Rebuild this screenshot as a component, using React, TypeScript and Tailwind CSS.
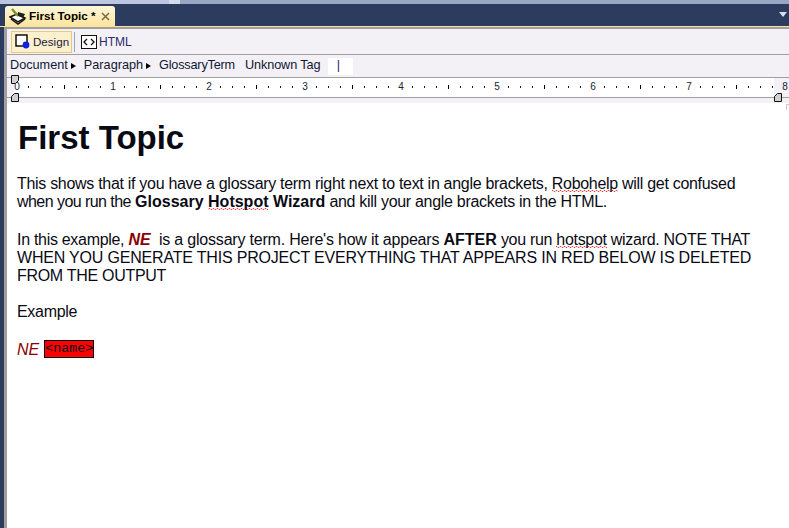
const ticks = Array.from({ length: 65 }, (_, i) => i);

const Squiggle: React.FC<{ children: React.ReactNode }> = ({ children }) => (
  <span className="bg-[url('data:image/svg+xml,%3Csvg%20xmlns=%22http://www.w3.org/2000/svg%22%20width=%224%22%20height=%222%22%3E%3Cpath%20d=%22M0%201.5L1%20.5L2%20.5L3%201.5L4%201.5%22%20fill=%22none%22%20stroke=%22%23e03030%22%20stroke-width=%22.9%22/%3E%3C/svg%3E')] bg-[length:4px_2px] bg-bottom bg-repeat-x">
    {children}
  </span>
);

const Handle: React.FC<{ className: string; flip?: boolean }> = ({ className, flip }) => (
  <svg width="8" height="9" viewBox="0 0 8 9" className={className}>
    <path
      d={flip ? "M.5 3.5 L3.5 .5 H7.5 V8.5 H.5 Z" : "M.5 .5 H7.5 V5.5 L4.5 8.5 H.5 Z"}
      fill="#d0d0d0"
      stroke="#111"
    />
  </svg>
);

function Ruler() {
  return (
    <div className="relative h-[21px] shrink-0 border-y border-[#a0a0a0] bg-[#f3f1f6]">
      <div className="relative ml-[7px] mr-[15px] h-full bg-white">
        {ticks.map((i) => {
          if (i % 8 === 0) {
            return (
              <span
                key={i}
                className="absolute top-[2px] w-[8px] -translate-x-1/2 text-center text-[10px] leading-[14px] text-[#223]"
                style={{ left: i * 12 + 3 }}
              >
                {i / 8}
              </span>
            );
          }
          return (
            <span
              key={i}
              className={
                i % 4 === 0
                  ? "absolute top-[7px] h-[4px] w-px bg-black"
                  : "absolute top-[8px] h-[2px] w-px bg-[#222]"
              }
              style={{ left: i * 12 + 2 }}
            />
          );
        })}
      </div>
      <Handle className="absolute left-[4px] top-[-3px]" />
      <Handle className="absolute left-[4px] top-[15px]" flip />
      <Handle className="absolute left-[767px] top-[15px]" flip />
    </div>
  );
}

function App() {
  return (
    <div className="flex h-[528px] w-[789px] flex-col overflow-hidden bg-[#2b3c5e] font-['Liberation_Sans',sans-serif] text-black">
      <div className="flex h-[4px] shrink-0 bg-[#98a8c4]">
        <div className="w-[169px] bg-[#bcc6e0]" />
        <div className="w-[11px] bg-[#d4dcec]" />
      </div>
      <div className="flex h-[22px] shrink-0 items-end justify-between pl-[5px] pr-px">
        <div className="flex h-[20px] w-[110px] items-center rounded-t-[3px] bg-gradient-to-b from-[#fff7dc] to-[#fde49c] pl-[4px]">
          <svg width="18" height="17" viewBox="0 0 18 17" className="shrink-0">
            <path d="M1 9 L8 6 L16 10 L9 14 Z" fill="#fff" stroke="#111" strokeWidth="1.5" />
            <path d="M2 11 L9 16 L16 11" fill="none" stroke="#111" strokeWidth="1.5" />
            <path d="M3 1 L9 8" stroke="#7f8f2a" strokeWidth="2.4" />
            <path d="M9 4 L16 6 L14 10 L9 8 Z" fill="#222" />
          </svg>
          <span className="ml-[2px] whitespace-nowrap text-[11.7px] font-bold leading-none">First Topic *</span>
          <svg width="9" height="9" viewBox="0 0 9 9" className="ml-[5px] shrink-0">
            <path d="M1 1 L8 8 M8 1 L1 8" stroke="#7a6a4a" strokeWidth="1.5" />
          </svg>
        </div>
        <svg width="10" height="6" viewBox="0 0 10 6" className="mb-[8px]">
          <path d="M1 0 H9 L5 5 Z" fill="#d8dfee" />
        </svg>
      </div>
      <div className="h-px shrink-0 bg-[#fde49c]" />
      <div className="flex min-h-0 flex-1 flex-col pl-[4px]">
        <div className="flex min-h-0 flex-1 flex-col border-l-[3px] border-t-2 border-[#a0a0a0] bg-[#f3f1f6]">
          <div className="flex h-[26px] shrink-0 items-center border-b border-[#a0a0a0] pl-[4px]">
            <div className="flex h-[22px] w-[61px] items-center border border-[#e9c77c] bg-[#fdf0cf] pl-[3px] text-[11.6px] text-[#1a1a3a]">
              <svg width="15" height="15" viewBox="0 0 15 15" className="shrink-0">
                <rect x="1" y="1" width="11" height="11" fill="#fff" stroke="#000" strokeWidth="1.4" />
                <circle cx="11" cy="11" r="3.4" fill="#1020e0" />
              </svg>
              <span className="ml-[3px]">Design</span>
            </div>
            <div className="ml-[2px] h-[20px] w-px bg-[#9aa8c0]" />
            <div className="ml-[6px] flex items-center text-[12px] text-[#2a2a6a]">
              <svg width="16" height="14" viewBox="0 0 16 14" className="shrink-0">
                <rect x="0.5" y="0.5" width="15" height="13" fill="#fff" stroke="#111" />
                <path d="M6 4 L3 7 L6 10 M10 4 L13 7 L10 10" fill="none" stroke="#111" strokeWidth="1.3" />
              </svg>
              <span className="ml-[2px]">HTML</span>
            </div>
          </div>
          <div className="flex h-[22px] shrink-0 items-center pl-[3px] text-[12.7px] text-[#111833]">
            <span>Document</span>
            <span className="ml-[3px] mr-[8px] h-0 w-0 border-y-[3px] border-l-[5px] border-y-transparent border-l-black" />
            <span>Paragraph</span>
            <span className="ml-[3px] mr-[8px] h-0 w-0 border-y-[3px] border-l-[5px] border-y-transparent border-l-black" />
            <span className="tracking-[-0.2px]">GlossaryTerm</span>
            <span className="ml-[10px] tracking-[-0.1px]">Unknown Tag</span>
            <span className="ml-[8px] flex h-[17px] w-[25px] items-center justify-center bg-white pr-[5px] text-[#2a2a6a]">|</span>
          </div>
          <Ruler />
          <div className="min-h-0 flex-1 pt-[5px]">
            <div className="relative h-full bg-white pl-[10px] pr-[19px] text-[16px] leading-[18px] tracking-[-0.3px] text-[#0a0a14]">
              <div className="absolute right-0 top-px h-[6px] w-[3px] border-l border-t border-[#c8c8c8]" />
              <h1 className="pl-px pt-[16px] text-[33px] font-bold leading-[37px] tracking-normal">First Topic</h1>
              <p className="mt-[19px]">
                This shows that if you have a glossary term right next to text in angle brackets, <Squiggle>Robohelp</Squiggle> will get confused <span className="tracking-[-0.55px]">when you run the</span> <b className="tracking-normal">Glossary <Squiggle>Hotspot</Squiggle> Wizard</b> and kill your angle brackets in the HTML.
              </p>
              <p className="mt-[20px]">
                In this example, <b className="italic tracking-normal text-[#8b0000]">NE</b>&nbsp; <span className="tracking-[-0.2px]">is a glossary term. Here's how it appears</span> <b className="tracking-normal">AFTER</b> you run <Squiggle>hotspot</Squiggle> wizard. NOTE THAT <span className="tracking-[-0.19px]">WHEN YOU GENERATE THIS PROJECT EVERYTHING THAT APPEARS IN RED BELOW IS DELETED</span> FROM THE OUTPUT
              </p>
              <p className="mt-[18px]">Example</p>
              <p className="mt-[19px] flex items-start">
                <span className="pt-px italic tracking-normal text-[#8b0000]">NE</span>
                <span className="ml-[5px] border border-black bg-[#ff0000] font-['Liberation_Mono',monospace] text-[13.33px] leading-[16px] tracking-normal">&lt;name&gt;</span>
              </p>
            </div>
          </div>
        </div>
      </div>
    </div>
  );
}

export default App;
